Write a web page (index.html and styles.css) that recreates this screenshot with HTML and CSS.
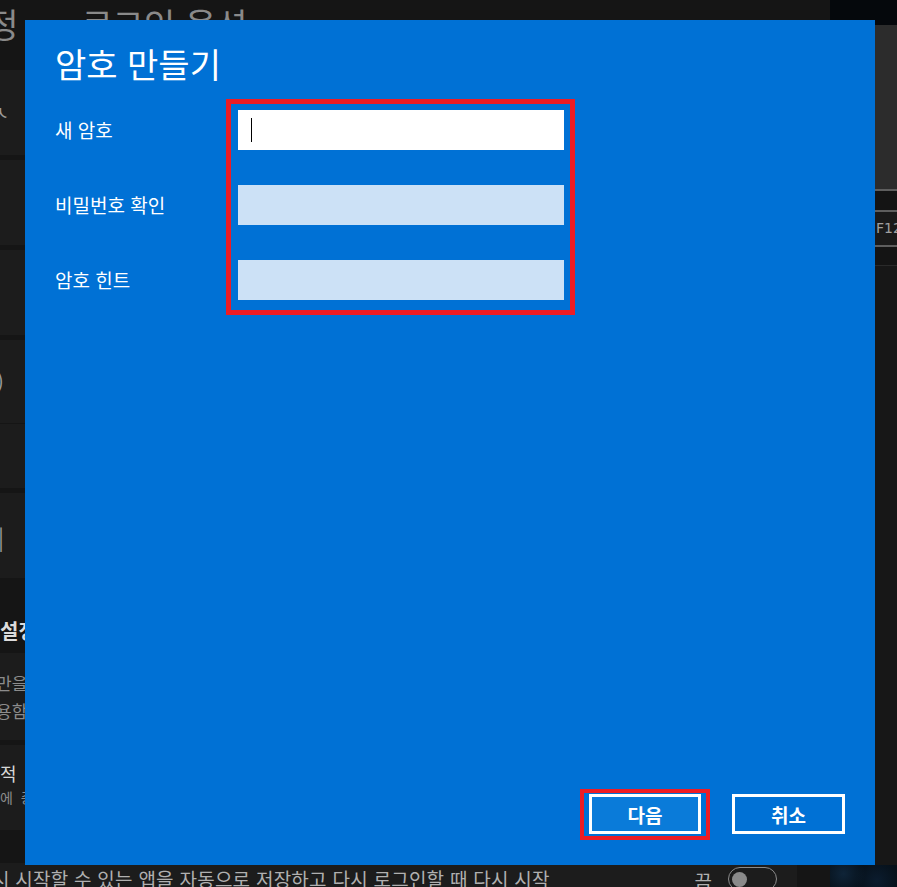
FILE: index.html
```html
<!DOCTYPE html>
<html lang="ko">

<head>
    <meta charset="UTF-8">
    <meta name="viewport" content="width=device-width, initial-scale=1.0">
    <title>암호 만들기</title>
    <link rel="stylesheet" href="styles.css">
</head>

<body>
    <div class="screen">
        <!-- Settings window behind the dialog -->
        <div class="settings">
            <header class="settings-head">
                <span class="crumb">계정</span>
                <span class="crumb">로그인 옵션</span>
            </header>

            <div class="settings-body">
                <div class="card"><span class="frag frag-a">ㅅ</span></div>
                <div class="card"></div>
                <div class="card"></div>
                <div class="group">
                    <div class="card card-short"><span class="frag frag-b">)</span></div>
                    <div class="card card-sub"></div>
                </div>
                <div class="card"><span class="frag frag-c">|</span></div>
                <div class="section-title">설정</div>
                <div class="card card-tall">
                    <div class="card-lines">
                        <span class="line-muted">만을</span>
                        <span class="line-muted">용함</span>
                    </div>
                </div>
                <div class="card">
                    <div class="card-lines card-lines-tight">
                        <span class="line-strong">적 잠</span>
                        <span class="line-small">에 중</span>
                    </div>
                </div>
                <div class="card card-bottom">
                    <span class="bottom-text">시 시작할 수 있는 앱을 자동으로 저장하고 다시 로그인할 때 다시 시작</span>
                    <span class="toggle-label">끔</span>
                    <span class="toggle"><span class="toggle-knob"></span></span>
                </div>
            </div>
        </div>

        <!-- Another window at the right edge -->
        <div class="side">
            <div class="side-top"></div>
            <div class="side-panel"></div>
            <div class="side-rule"></div>
            <div class="side-gap"></div>
            <div class="side-rule"></div>
            <div class="side-key">F12</div>
            <div class="side-rule"></div>
            <div class="side-gap side-gap-last"></div>
            <div class="side-fill"></div>
            <div class="side-wallpaper"></div>
        </div>
    </div>

    <!-- Create password dialog -->
    <div class="dialog">
        <h1 class="dialog-title">암호 만들기</h1>

        <div class="form">
            <div class="labels">
                <label class="label">새 암호</label>
                <label class="label">비밀번호 확인</label>
                <label class="label">암호 힌트</label>
            </div>
            <div class="fields highlight">
                <div class="field field-active"><span class="caret"></span></div>
                <div class="field"></div>
                <div class="field"></div>
            </div>
        </div>

        <div class="dialog-footer">
            <div class="highlight highlight-button">
                <button class="btn btn-primary">다음</button>
            </div>
            <button class="btn">취소</button>
        </div>
    </div>
</body>

</html>
```

FILE: styles.css
```css
* {
    box-sizing: border-box;
}

html,
body {
    height: 100%;
}

body {
    margin: 0;
    font-family: "Noto Sans CJK KR", "Noto Sans", sans-serif;
    background-color: #141414;
    color: #fff;
    overflow: hidden;
}

.screen {
    display: flex;
    height: 887px;
}

/* Settings window */
.settings {
    width: 830px;
    flex-shrink: 0;
    display: flex;
    flex-direction: column;
    background-color: #151515;
}

.settings-head {
    height: 70px;
    padding-top: 7px;
    display: flex;
    gap: 63px;
    font-size: 34px;
    line-height: 34px;
    color: #8a8a8a;
    white-space: nowrap;
}

.settings-head .crumb:first-child {
    margin-left: -44px;
}

.settings-body {
    flex: 1;
    display: flex;
    flex-direction: column;
    gap: 5px;
    padding-right: 33px;
    min-height: 0;
}

.card {
    height: 85px;
    flex-shrink: 0;
    background-color: #1c1c1c;
    display: flex;
    align-items: center;
    color: #9a9a9a;
    white-space: nowrap;
}

.group {
    display: flex;
    flex-direction: column;
    gap: 1px;
}

.card-short {
    height: 83px;
}

.card-sub {
    height: 64px;
}

.card-tall {
    height: 87px;
}

.frag {
    font-size: 20px;
    line-height: 1;
}

.frag-a {
    margin-left: -9px;
}

.frag-b {
    margin-left: -3px;
}

.frag-c {
    margin-left: -2px;
    font-size: 22px;
}

.section-title {
    height: 65px;
    flex-shrink: 0;
    padding-top: 36px;
    font-size: 20px;
    line-height: 24px;
    font-weight: 700;
    color: #dcdcdc;
}

.card-lines {
    display: flex;
    flex-direction: column;
    margin-left: -4px;
}

.line-muted {
    font-size: 17px;
    line-height: 28px;
    color: #8c8c8c;
}

.card-lines-tight {
    margin-top: -8px;
    margin-left: 0;
}

.line-strong {
    font-size: 18px;
    line-height: 26px;
    color: #d6d6d6;
    letter-spacing: 4px;
}

.line-small {
    font-size: 14px;
    line-height: 22px;
    color: #8c8c8c;
    letter-spacing: 2px;
}

.card-bottom {
    height: auto;
    flex: 1;
    margin-top: 28px;
    align-items: flex-start;
    padding-top: 4px;
    color: #b0b0b0;
}

.bottom-text {
    margin-left: -8px;
    font-size: 19px;
    line-height: 24px;
    letter-spacing: 0.25px;
    flex: 1;
}

.toggle-label {
    font-size: 19px;
    line-height: 24px;
    margin-top: 2px;
}

.toggle {
    width: 49px;
    height: 24px;
    margin: 0 20px 0 16px;
    border: 1.5px solid #8a8a8a;
    border-radius: 12px;
    display: flex;
    align-items: center;
    padding-left: 2.5px;
}

.toggle-knob {
    width: 15px;
    height: 15px;
    border-radius: 50%;
    background-color: #8a8a8a;
}

/* Right edge window */
.side {
    flex: 1;
    min-width: 0;
    overflow: hidden;
    display: flex;
    flex-direction: column;
    background-color: #171717;
}

.side-top {
    height: 25px;
    background-color: #05080c;
}

.side-panel {
    height: 164px;
    background-color: #2c2c2c;
}

.side-rule {
    height: 2px;
    background-color: #5e5e5e;
}

.side-gap {
    height: 19px;
    background-color: #141414;
}

.side-gap-last {
    border-bottom: 1px solid #2a2a2a;
}

.side-key {
    height: 33px;
    padding-left: 46px;
    background-color: #1a1a1a;
    color: #a0a0a0;
    font-family: "DejaVu Sans", sans-serif;
    font-size: 14px;
    line-height: 33px;
    white-space: nowrap;
}

.side-fill {
    flex: 1;
}

.side-wallpaper {
    height: 22px;
    background:
        radial-gradient(circle at 20% 40%, #0f2438 0, transparent 40%),
        radial-gradient(circle at 70% 70%, #0b1c2e 0, transparent 45%),
        #061019;
}

/* Dialog */
.dialog {
    position: absolute;
    left: 25px;
    top: 20px;
    width: 850px;
    height: 845px;
    padding: 22px 30px 25px;
    background-color: #0071d5;
    display: flex;
    flex-direction: column;
}

.dialog-title {
    margin: 0;
    font-size: 34px;
    line-height: 44px;
    font-weight: 400;
}

.form {
    display: flex;
    margin-top: 13px;
}

.labels {
    width: 171px;
    padding-top: 11px;
    display: flex;
    flex-direction: column;
    gap: 35px;
}

.label {
    height: 40px;
    font-size: 19px;
    line-height: 40px;
}

.highlight {
    border: 5px solid #ed1c24;
}

.fields {
    padding: 6px 6px 10px 7px;
    display: flex;
    flex-direction: column;
    gap: 35px;
}

.field {
    width: 326px;
    height: 40px;
    background-color: #cce1f6;
    display: flex;
    align-items: center;
}

.field-active {
    background-color: #fff;
}

.caret {
    width: 1px;
    height: 24px;
    margin-left: 13px;
    background-color: #000;
}

.dialog-footer {
    margin-top: auto;
    display: flex;
    justify-content: flex-end;
    align-items: flex-start;
    gap: 22px;
}

.highlight-button {
    border-width: 4px;
    padding: 1px 5px 2px;
}

.btn {
    width: 113px;
    height: 40px;
    border: 3px solid #fff;
    background-color: transparent;
    color: #fff;
    font-family: inherit;
    font-size: 19px;
    font-weight: 700;
    cursor: pointer;
    margin-top: 5px;
}

.btn-primary {
    width: 112px;
    margin-top: 0;
    background-color: #0a7bd9;
}
```
